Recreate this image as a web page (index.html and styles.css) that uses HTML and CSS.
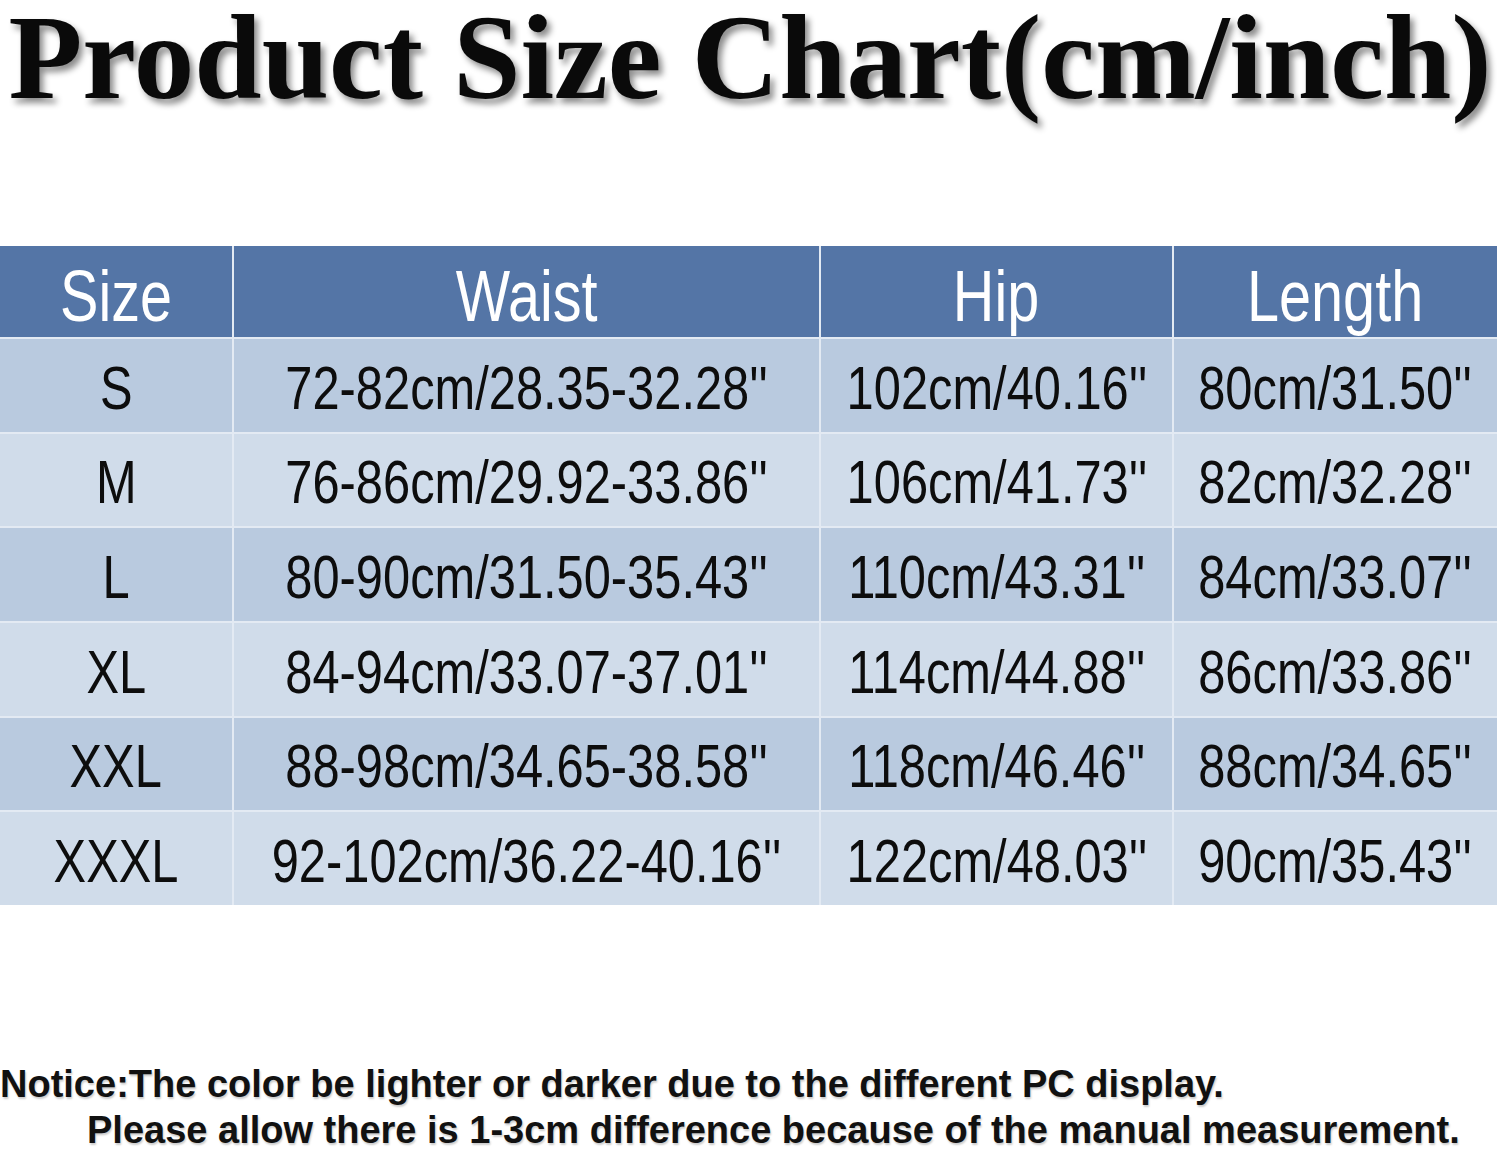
FILE: index.html
```html
<!DOCTYPE html>
<html lang="en">
<head>
<meta charset="utf-8">
<title>Product Size Chart</title>
<link rel="stylesheet" href="styles.css">
</head>
<body>
<main class="page">
  <h1 class="title">Product Size Chart(cm/inch)</h1>
  <div class="chart">
    <div class="cell head"><span class="txt">Size</span></div>
    <div class="cell head"><span class="txt">Waist</span></div>
    <div class="cell head"><span class="txt">Hip</span></div>
    <div class="cell head"><span class="txt">Length</span></div>

    <div class="cell odd"><span class="txt">S</span></div>
    <div class="cell odd"><span class="txt">72-82cm/28.35-32.28''</span></div>
    <div class="cell odd"><span class="txt">102cm/40.16''</span></div>
    <div class="cell odd"><span class="txt">80cm/31.50''</span></div>

    <div class="cell even"><span class="txt">M</span></div>
    <div class="cell even"><span class="txt">76-86cm/29.92-33.86''</span></div>
    <div class="cell even"><span class="txt">106cm/41.73''</span></div>
    <div class="cell even"><span class="txt">82cm/32.28''</span></div>

    <div class="cell odd"><span class="txt">L</span></div>
    <div class="cell odd"><span class="txt">80-90cm/31.50-35.43''</span></div>
    <div class="cell odd"><span class="txt">110cm/43.31''</span></div>
    <div class="cell odd"><span class="txt">84cm/33.07''</span></div>

    <div class="cell even"><span class="txt">XL</span></div>
    <div class="cell even"><span class="txt">84-94cm/33.07-37.01''</span></div>
    <div class="cell even"><span class="txt">114cm/44.88''</span></div>
    <div class="cell even"><span class="txt">86cm/33.86''</span></div>

    <div class="cell odd"><span class="txt">XXL</span></div>
    <div class="cell odd"><span class="txt">88-98cm/34.65-38.58''</span></div>
    <div class="cell odd"><span class="txt">118cm/46.46''</span></div>
    <div class="cell odd"><span class="txt">88cm/34.65''</span></div>

    <div class="cell even"><span class="txt">XXXL</span></div>
    <div class="cell even"><span class="txt">92-102cm/36.22-40.16''</span></div>
    <div class="cell even"><span class="txt">122cm/48.03''</span></div>
    <div class="cell even"><span class="txt">90cm/35.43''</span></div>
  </div>
  <div class="notice">
    <p class="line">Notice:The color be lighter or darker due to the different PC display.</p>
    <p class="line indent">Please allow there is 1-3cm difference because of the manual measurement.</p>
  </div>
</main>
</body>
</html>
```
FILE: styles.css
```css
html, body {
  margin: 0;
  padding: 0;
  background: #ffffff;
}

.page {
  width: 1500px;
  height: 1154px;
  overflow: hidden;
}

.title {
  margin: 0;
  font-family: "Liberation Serif", "Times New Roman", serif;
  font-weight: bold;
  font-size: 121px;
  line-height: 115px;
  color: #0a0a0a;
  text-align: center;
  white-space: nowrap;
  text-shadow: 4px 5px 6px rgba(0, 0, 0, 0.45);
}

.chart {
  margin-top: 131px;
  width: 1497px;
  height: 659px;
  display: grid;
  grid-template-columns: 232px 585px 351px 323px;
  grid-template-rows: 91px repeat(6, 1fr);
  gap: 2px;
  background: #e3eaf3;
  font-family: "Liberation Sans", Arial, sans-serif;
}

.cell {
  display: flex;
  align-items: center;
  justify-content: center;
  white-space: nowrap;
  font-size: 61px;
  color: #0d0d0d;
}

.txt {
  display: inline-block;
  transform: scaleX(0.8);
  transform-origin: center;
}

.head {
  background: #5475a6;
  color: #ffffff;
  font-size: 72px;
  padding-top: 8px;
}

.odd {
  background: #b9cadf;
  padding-top: 5px;
}

.even {
  background: #d0dcea;
  padding-top: 5px;
}

.notice {
  margin-top: 156px;
  font-family: "Liberation Sans", Arial, sans-serif;
  font-weight: bold;
  font-size: 38px;
  line-height: 46px;
  color: #111111;
  text-shadow: 1px 2px 2px rgba(0, 0, 0, 0.2);
}

.line {
  margin: 0;
  white-space: nowrap;
}

.indent {
  padding-left: 87px;
}
```
